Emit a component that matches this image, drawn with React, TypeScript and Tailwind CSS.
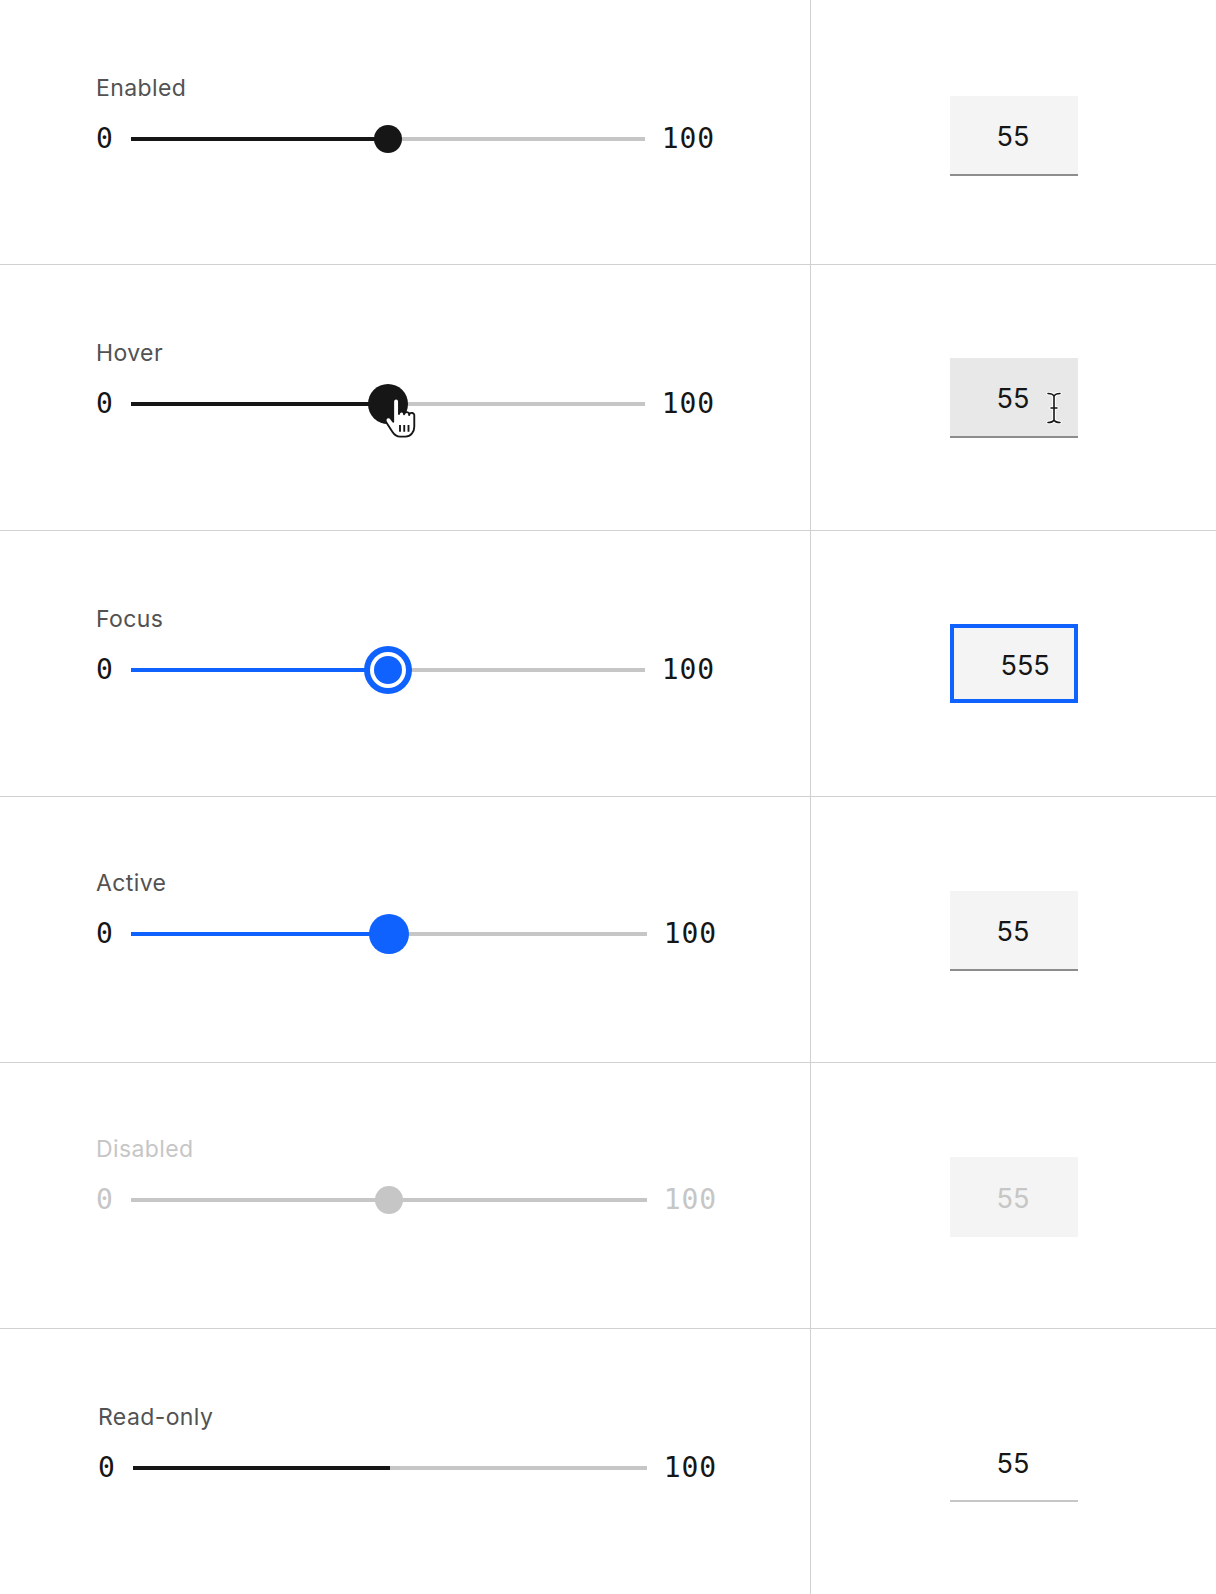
import React from "react";

type State = "enabled" | "hover" | "focus" | "active" | "disabled" | "readonly";

const rows: { label: string; state: State; h: string; shift: string }[] = [
  { label: "Enabled", state: "enabled", h: "h-[265px]", shift: "" },
  { label: "Hover", state: "hover", h: "h-[266px]", shift: "" },
  { label: "Focus", state: "focus", h: "h-[266px]", shift: "" },
  { label: "Active", state: "active", h: "h-[266px]", shift: "-mt-[2px]" },
  { label: "Disabled", state: "disabled", h: "h-[266px]", shift: "-mt-[2px]" },
  { label: "Read-only", state: "readonly", h: "h-[265px]", shift: "" },
];

const sans = "font-['Inter','Noto_Sans',sans-serif]";
const mono = "font-['DejaVu_Sans_Mono','Liberation_Mono',monospace]";

export default function App() {
  return (
    <div className="w-[1216px] bg-white">
      {rows.map((r, i) => (
        <div
          key={r.label}
          className={`flex ${r.h} ${i < rows.length - 1 ? "border-b border-[#d1d1d1]" : ""}`}
        >
          <div className="w-[811px] shrink-0 border-r border-[#d1d1d1]">
            <SliderCell label={r.label} state={r.state} shift={r.shift} />
          </div>
          <div className="flex flex-1 justify-center">
            <NumberBox state={r.state} />
          </div>
        </div>
      ))}
    </div>
  );
}

function SliderCell({ label, state, shift }: { label: string; state: State; shift: string }) {
  const disabled = state === "disabled";
  const blue = state === "focus" || state === "active";
  const right = state === "active" || state === "disabled";
  const ro = state === "readonly";

  return (
    <div className={`pt-[76px] ${ro ? "pl-[98px]" : "pl-[96px]"} ${shift}`}>
      <div
        className={`${sans} h-[24px] text-[23px] leading-[24px] tracking-[0.4px] ${
          disabled ? "text-[#c6c6c6]" : "text-[#525252]"
        }`}
      >
        {label}
      </div>
      <div className="mt-[25px] flex h-[28px] items-center">
        <span
          className={`${mono} text-[28px] leading-[28px] ${
            disabled ? "text-[#c6c6c6]" : "text-[#161616]"
          }`}
        >
          0
        </span>
        <div
          className={`relative ml-[18px] h-[4px] bg-[#c6c6c6] ${
            right ? "mr-[17px] w-[516px]" : "mr-[17px] w-[514px]"
          }`}
        >
          {!disabled && (
            <div
              className={`absolute left-0 top-0 h-[4px] w-1/2 ${
                blue ? "bg-[#0f62fe]" : "bg-[#161616]"
              }`}
            />
          )}
          <Thumb state={state} />
        </div>
        <span
          className={`${mono} text-[28px] leading-[28px] tracking-[0.8px] ${
            disabled ? "text-[#c6c6c6]" : "text-[#161616]"
          }`}
        >
          100
        </span>
      </div>
    </div>
  );
}

function Thumb({ state }: { state: State }) {
  if (state === "readonly") return null;

  if (state === "focus") {
    return (
      <div className="absolute left-1/2 top-1/2 flex h-[48px] w-[48px] -translate-x-1/2 -translate-y-1/2 items-center justify-center rounded-full bg-[#0f62fe]">
        <div className="flex h-[36px] w-[36px] items-center justify-center rounded-full bg-white">
          <div className="h-[28px] w-[28px] rounded-full bg-[#0f62fe]" />
        </div>
      </div>
    );
  }

  const size =
    state === "hover" || state === "active" ? "h-[40px] w-[40px]" : "h-[28px] w-[28px]";
  const color =
    state === "active" ? "bg-[#0f62fe]" : state === "disabled" ? "bg-[#c6c6c6]" : "bg-[#161616]";

  return (
    <>
      <div
        className={`absolute left-1/2 top-1/2 ${size} -translate-x-1/2 -translate-y-1/2 rounded-full ${color}`}
      />
      {state === "hover" && <HandCursor />}
    </>
  );
}

function HandCursor() {
  // pointer cursor sitting on the thumb
  return (
    <svg
      className="absolute left-[252px] top-[-5px]"
      width="34"
      height="42.5"
      viewBox="0 0 20 25"
      fill="none"
    >
      <path
        d="M6 2.6a1.7 1.7 0 0 1 3.4 0V10a1.5 1.5 0 0 1 3 .2a1.5 1.5 0 0 1 3 .4a1.5 1.5 0 0 1 3 .6V17.5c0 3.2-2.1 5.8-5.2 5.8H10c-2 0-3.3-1-4.4-2.7L1.9 14.8c-.8-1.2-.3-2.5.9-2.8c.9-.2 1.6.3 2.1 1L6 14.6Z"
        fill="white"
        stroke="#161616"
        strokeWidth="1.1"
        strokeLinejoin="round"
      />
      <path d="M10 16.5v4M12.5 16.5v4M15 16.5v4" stroke="#161616" strokeWidth="1.1" />
    </svg>
  );
}

function IBeam() {
  return (
    <svg
      className="absolute left-[96px] top-[33px]"
      width="16"
      height="34"
      viewBox="0 0 16 34"
      fill="none"
    >
      <path
        d="M2 2.5c3 0 5 .8 6 2.5c1-1.7 3-2.5 6-2.5M8 5v24M2 31.5c3 0 5-.8 6-2.5c1 1.7 3 2.5 6 2.5M5 17h6"
        stroke="white"
        strokeWidth="3.6"
        strokeLinecap="round"
      />
      <path
        d="M2 2.5c3 0 5 .8 6 2.5c1-1.7 3-2.5 6-2.5M8 5v24M2 31.5c3 0 5-.8 6-2.5c1 1.7 3 2.5 6 2.5M5 17h6"
        stroke="#161616"
        strokeWidth="1.6"
        strokeLinecap="round"
      />
    </svg>
  );
}

function NumberBox({ state }: { state: State }) {
  const base = `${sans} relative flex w-[128px] items-center pl-[47px] pt-[4px] text-[27px]`;

  if (state === "focus") {
    return (
      <div className="pt-[93px]">
        <div
          className={`${base} h-[79px] border-[4px] border-[#0f62fe] bg-[#f4f4f4] pl-[43px] pt-[6px] text-[#161616]`}
        >
          555
        </div>
      </div>
    );
  }

  if (state === "disabled") {
    return (
      <div className="pt-[94px]">
        <div className={`${base} h-[80px] bg-[#f4f4f4] text-[#c6c6c6]`}>55</div>
      </div>
    );
  }

  if (state === "readonly") {
    return (
      <div className="pt-[95px]">
        <div className={`${base} h-[78px] border-b-2 border-[#c6c6c6] text-[#161616]`}>55</div>
      </div>
    );
  }

  return (
    <div className={state === "hover" ? "pt-[93px]" : state === "active" ? "pt-[94px]" : "pt-[96px]"}>
      <div
        className={`${base} h-[80px] border-b-2 border-[#8d8d8d] text-[#161616] ${
          state === "hover" ? "bg-[#e8e8e8]" : "bg-[#f4f4f4]"
        }`}
      >
        55
        {state === "hover" && <IBeam />}
      </div>
    </div>
  );
}
